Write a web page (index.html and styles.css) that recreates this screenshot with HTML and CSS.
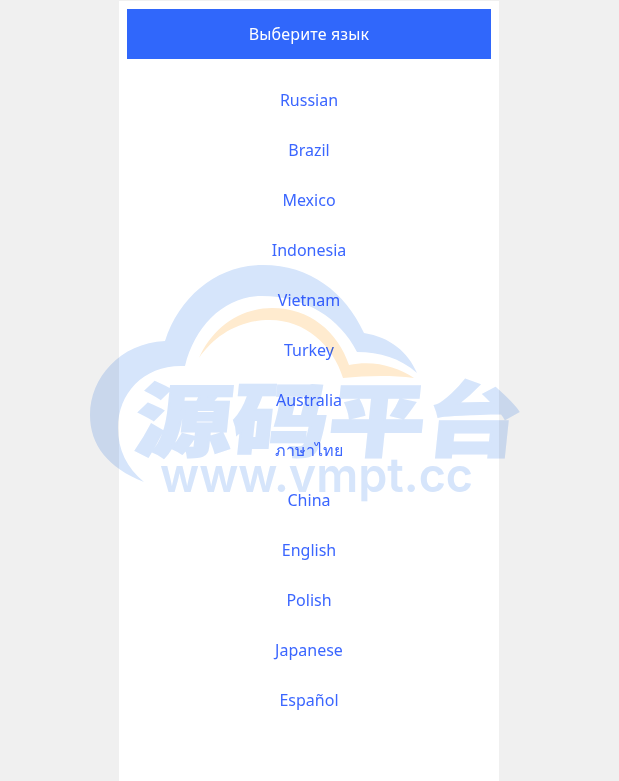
FILE: index.html
```html
<!DOCTYPE html>
<html lang="ru">
<head>
    <meta charset="UTF-8">
    <title>Выберите язык</title>
    <link rel="stylesheet" href="styles.css">
</head>
<body>
<div class="lang_box">
    <h1 class="lang_title">Выберите язык</h1>
    <ul class="lang_list">
        <li><a href="#">Russian</a></li>
        <li><a href="#">Brazil</a></li>
        <li><a href="#">Mexico</a></li>
        <li><a href="#">Indonesia</a></li>
        <li><a href="#">Vietnam</a></li>
        <li><a href="#">Turkey</a></li>
        <li><a href="#">Australia</a></li>
        <li><a href="#">ภาษาไทย</a></li>
        <li><a href="#">China</a></li>
        <li><a href="#">English</a></li>
        <li><a href="#">Polish</a></li>
        <li><a href="#">Japanese</a></li>
        <li><a href="#">Español</a></li>
    </ul>
</div>
<!--watermark-->
<svg class="watermark" width="619" height="781" viewBox="0 0 619 781">
    <path class="wm_blue" d="M144 482C108 468 90 445 90 415C90 378 120 343 165 341C180 295 218 265 263 265C310 265 345 292 364 333C390 337 408 352 417 373C400 358 380 352 357 352C340 318 305 296 262 296C225 296 195 325 185 366C145 364 118 392 118 428C118 450 127 468 144 482Z"/>
    <path class="wm_orange" d="M199 358C212 328 240 308 272 308C310 308 338 332 349 365C375 360 397 367 414 378C390 375 365 376 343 378C333 345 305 320 270 320C240 320 215 335 199 358Z"/>
    <text class="wm_cn" x="0" y="0" transform="translate(133 450) skewX(-6)" textLength="386" lengthAdjust="spacingAndGlyphs">源码平台</text>
    <text class="wm_url" x="160" y="492" textLength="313" lengthAdjust="spacingAndGlyphs">www.vmpt.cc</text>
</svg>
</body>
</html>
```

FILE: styles.css
```css
/*Initialization style*/
html,body,h1,ul,li{margin:0;padding:0;}
ul,li{list-style:none;}
body{background:#f0f0f0;font-family:"Noto Sans","Noto Sans CJK SC",sans-serif;min-height:781px;overflow:hidden;}
a:link,a:visited{color:#3b66ff;text-decoration:none;}

/*language box*/
.lang_box{width:364px;min-height:764px;margin:1px 0 0 119px;padding:8px;background:#fff;}
.lang_title{height:50px;line-height:50px;background:#3067fb;color:#fff;font-size:16px;font-weight:normal;letter-spacing:.15px;text-align:center;}
.lang_list{padding-top:16px;}
.lang_list li{height:50px;line-height:50px;font-size:16px;text-align:center;}

/*watermark*/
.watermark{position:absolute;left:0;top:0;pointer-events:none;mix-blend-mode:multiply;}
.wm_blue{fill:#d6e5fb;}
.wm_orange{fill:#ffebcf;}
.wm_cn{fill:#d6e5fb;stroke:#d6e5fb;stroke-width:2px;font-family:"Noto Sans CJK SC",sans-serif;font-weight:900;font-size:80px;}
.wm_url{fill:#d6e5fb;font-family:Inter,sans-serif;font-weight:600;font-size:48px;}
```
